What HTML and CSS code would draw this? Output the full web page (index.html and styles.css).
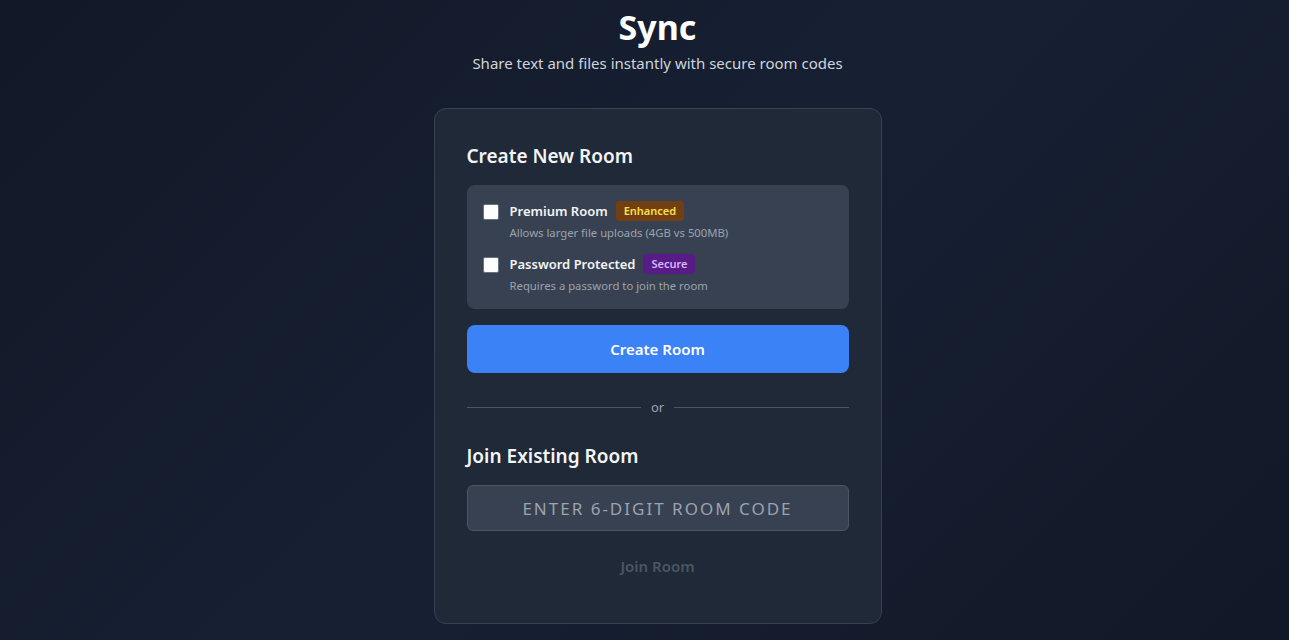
FILE: index.html
```html
<!DOCTYPE html>
<html lang="en">
<head>
<meta charset="utf-8">
<title>Sync</title>
<link rel="stylesheet" href="styles.css">
</head>
<body>
<main class="page">
  <header class="hero">
    <h1 class="title">Sync</h1>
    <p class="subtitle">Share text and files instantly with secure room codes</p>
  </header>
  <section class="card">
    <h2 class="section-title">Create New Room</h2>
    <div class="options">
      <label class="option">
        <input type="checkbox" class="check">
        <span class="option-body">
          <span class="option-head"><span class="option-name">Premium Room</span><span class="badge badge-amber">Enhanced</span></span>
          <span class="option-desc">Allows larger file uploads (4GB vs 500MB)</span>
        </span>
      </label>
      <label class="option">
        <input type="checkbox" class="check">
        <span class="option-body">
          <span class="option-head"><span class="option-name">Password Protected</span><span class="badge badge-purple">Secure</span></span>
          <span class="option-desc">Requires a password to join the room</span>
        </span>
      </label>
    </div>
    <button class="btn-primary">Create Room</button>
    <div class="divider"><span class="line"></span><span class="or">or</span><span class="line"></span></div>
    <h2 class="section-title join-title">Join Existing Room</h2>
    <input class="code-input" type="text" placeholder="Enter 6-digit room code">
    <button class="btn-ghost" disabled>Join Room</button>
  </section>
</main>
</body>
</html>
```
FILE: styles.css
```css
* { box-sizing: border-box; }
html, body { margin: 0; height: 100%; }
body {
  font-family: "Noto Sans", "Open Sans", sans-serif;
  background: linear-gradient(135deg, #111827 0%, #172033 50%, #111827 100%);
  color: #f3f4f6;
  overflow: hidden;
}
.page {
  display: flex;
  flex-direction: column;
  align-items: center;
  padding-left: 26px;
}
.hero { text-align: center; }
.title {
  margin: 2px 0 0;
  font-size: 34px;
  line-height: 50px;
  font-weight: 700;
  color: #ffffff;
}
.subtitle {
  margin: -1px 0 0;
  font-size: 15px;
  line-height: 24px;
  color: #d1d5db;
}
.card {
  margin-top: 33px;
  width: 448px;
  background: #1f2937;
  border: 1px solid #374151;
  border-radius: 12px;
  padding: 32px 32px 36px;
  display: flex;
  flex-direction: column;
}
.section-title {
  margin: 1px 0 15px;
  font-size: 19px;
  line-height: 28px;
  font-weight: 600;
  color: #f3f4f6;
}
.options {
  background: #374151;
  border-radius: 8px;
  padding: 15px 16px 15px;
  display: flex;
  flex-direction: column;
  gap: 12px;
}
.option {
  display: flex;
  align-items: flex-start;
  gap: 11px;
  cursor: pointer;
}
.check {
  appearance: none;
  -webkit-appearance: none;
  margin: 4px 0 0;
  width: 16px;
  height: 16px;
  background: #ffffff;
  border: 1px solid #6b7280;
  border-radius: 2px;
  flex: none;
}
.option-body { display: flex; flex-direction: column; }
.option-head { display: flex; align-items: center; gap: 8px; height: 22px; }
.option-name { font-size: 13px; font-weight: 600; color: #f3f4f6; }
.badge {
  font-size: 11px;
  font-weight: 600;
  line-height: 18px;
  padding: 1px 8px;
  border-radius: 3px;
}
.badge-amber { background: #713f12; color: #fde047; }
.badge-purple { background: #581c87; color: #d8b4fe; }
.option-desc { margin-top: 3px; font-size: 11.3px; line-height: 16px; color: #9ca3af; }
.btn-primary {
  margin-top: 16px;
  height: 48px;
  border: 0;
  border-radius: 8px;
  background: #3b82f6;
  color: #ffffff;
  font-family: inherit;
  font-size: 15px;
  font-weight: 600;
  cursor: pointer;
}
.divider {
  display: flex;
  align-items: center;
  gap: 8px;
  margin: 24px 0 24px;
}
.line { flex: 1; height: 1px; background: #4b5563; }
.or { font-size: 13px; line-height: 20px; color: #9ca3af; padding: 0 2px; }
.code-input {
  height: 46px;
  background: #374151;
  border: 1px solid #4b5563;
  border-radius: 6px;
  text-align: center;
  font-family: inherit;
  font-size: 17px;
  letter-spacing: 2px;
  text-transform: uppercase;
  color: #f3f4f6;
}
.code-input::placeholder { color: #9ca3af; text-transform: uppercase; }
.btn-ghost {
  margin-top: 14px;
  height: 42px;
  border: 0;
  background: transparent;
  color: #4b5563;
  font-family: inherit;
  font-size: 15px;
  font-weight: 600;
}
```
